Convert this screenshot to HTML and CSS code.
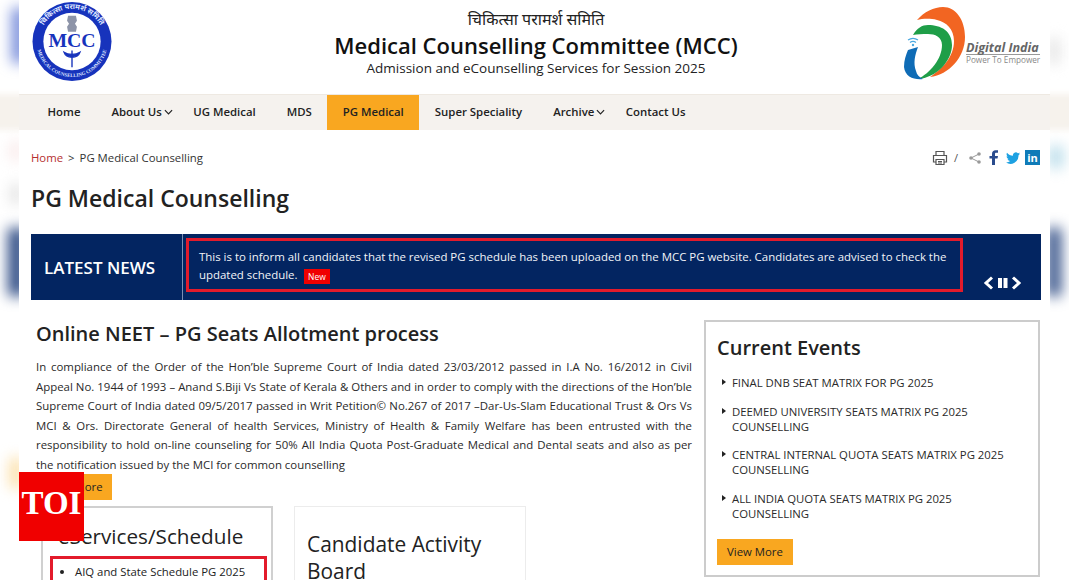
FILE: index.html
```html
<!DOCTYPE html>
<html lang="en">
<head>
<meta charset="utf-8">
<title>PG Medical Counselling</title>
<link rel="stylesheet" href="styles.css">
</head>
<body>
<div class="backdrop" aria-hidden="true">
  <div class="blob blob-blue"></div>
  <div class="blob blob-beige"></div>
  <div class="blob blob-pink"></div>
  <div class="blob blob-grey"></div>
  <div class="blob blob-navy-l"></div>
  <div class="blob blob-orange"></div>
  <div class="blob blob-grey-r"></div>
  <div class="blob blob-sky"></div>
  <div class="blob blob-navy-r"></div>
</div>
<div class="page">
  <header class="masthead">
    <svg class="seal" viewBox="0 0 82 80">
      <circle cx="41" cy="40" r="40" fill="#1733bc"/>
      <circle cx="41" cy="40" r="29" fill="#fff"/>
      <defs>
        <path id="sealTop" d="M8 40a33 33 0 0 1 66 0"/>
        <path id="sealBottom" d="M5 40a36 36 0 0 0 72 0"/>
      </defs>
      <text class="seal-arc seal-arc-top"><textPath href="#sealTop" startOffset="50%" text-anchor="middle">चिकित्सा परामर्श समिति</textPath></text>
      <text class="seal-arc"><textPath href="#sealBottom" startOffset="50%" text-anchor="middle">MEDICAL COUNSELLING COMMITTEE</textPath></text>
      <path d="M37 14h8l1 5-2 3 2 3-1 5h-8l-1-5 2-3-2-3z" fill="#8d94a8"/>
      <text class="seal-mcc" x="41" y="46" text-anchor="middle">MCC</text>
      <path d="M41 49v17M33 51c3 2 5 2 8 2s5 0 8-2c-1 3-4 5-8 5s-7-2-8-5z" stroke="#1733bc" stroke-width="1.400" fill="#1733bc"/>
    </svg>
    <div class="masthead-title">
      <div class="hindi">चिकित्सा परामर्श समिति</div>
      <div class="committee">Medical Counselling Committee (MCC)</div>
      <div class="tagline">Admission and eCounselling Services for Session 2025</div>
    </div>
    <div class="digital-india">
      <svg class="di-mark" viewBox="0 0 62 74">
        <path d="M13 13C20 5 30 0 39 0 52 0 61 13 61 30 61 50 45 68 26 70 38 62 50 50 50 34 50 22 42 15 33 13 25 11 18 12 13 13z" fill="#f26522"/>
        <path d="M9 28C13 21 18 18 24 18 37 18 48 24 48 38 48 54 32 71 14 72 26 66 38 52 38 38 38 30 31 27 24 27 18 27 13 27 9 28z" fill="#1f9e48"/>
        <path d="M4 43L14 40C11 48 9 56 12 64 13 68 15 70 19 72 10 73 1 70 0 60 0 53 2 48 4 43z" fill="#0f6cb6"/>
        <path d="M4 33C7 31 11 31 14 33M6 35.500C8 34 10 34 12 35.500" fill="none" stroke="#4aa8e0" stroke-width="1.200"/>
        <circle cx="9" cy="38" r="1.200" fill="#4aa8e0"/>
      </svg>
      <div class="di-text">
        <div class="di-name">Digital India</div>
        <div class="di-sub">Power To Empower</div>
      </div>
    </div>
  </header>

  <nav class="nav">
    <a class="nav-item">Home</a>
    <a class="nav-item nav-drop">About Us<svg class="chev" viewBox="0 0 10 6"><path d="M1 1l4 4 4-4"/></svg></a>
    <a class="nav-item">UG Medical</a>
    <a class="nav-item">MDS</a>
    <a class="nav-item nav-active">PG Medical</a>
    <a class="nav-item">Super Speciality</a>
    <a class="nav-item nav-drop">Archive<svg class="chev" viewBox="0 0 10 6"><path d="M1 1l4 4 4-4"/></svg></a>
    <a class="nav-item">Contact Us</a>
  </nav>

  <div class="crumb-row">
    <div class="crumbs"><a class="crumb-home">Home</a><span class="crumb-sep">&gt;</span><span>PG Medical Counselling</span></div>
    <div class="tools">
      <svg class="tool-print" viewBox="0 0 16 16"><path d="M4 5V1.500h8V5M4 12H1.500V5.500h13V12H12M4 9.500h8v5H4zM6 11.500h4M6 13h4" fill="none" stroke="#555" stroke-width="1.200"/></svg>
      <span class="tool-slash">/</span>
      <svg class="tool-share" viewBox="0 0 12 12"><circle cx="10" cy="2" r="1.800"/><circle cx="2" cy="6" r="1.800"/><circle cx="10" cy="10" r="1.800"/><path d="M10 2L2 6l8 4" fill="none" stroke="#999"/></svg>
      <svg class="tool-fb" viewBox="0 0 9 15"><path d="M3 15V8.500H.5V6H3V4C3 1.500 4.500.3 6.500.3H9v2.500H7.300C6.300 2.800 6 3.300 6 4v2h3l-.5 2.500H6V15z" fill="#2a4b8d"/></svg>
      <svg class="tool-tw" viewBox="0 0 24 20"><path d="M24 2.400c-.9.400-1.800.7-2.800.8 1-.6 1.800-1.600 2.200-2.700-1 .6-2 1-3.100 1.200A4.900 4.900 0 0 0 12 6.200C8 6 4.300 4.100 1.700.9.400 3.200 1 6 3.200 7.500c-.8 0-1.600-.2-2.200-.6 0 2.400 1.700 4.400 3.900 4.900-.7.200-1.500.2-2.200.1.600 2 2.400 3.400 4.600 3.400A9.900 9.900 0 0 1 0 17.800 14 14 0 0 0 21.500 5.300c1-.7 1.800-1.700 2.500-2.900z" fill="#1da1e2"/></svg>
      <span class="tool-in">in</span>
    </div>
  </div>

  <h1 class="page-title">PG Medical Counselling</h1>

  <section class="news">
    <div class="news-label">LATEST NEWS</div>
    <div class="news-body">
      <div class="news-msg">This is to inform all candidates that the revised PG schedule has been uploaded on the MCC PG website. Candidates are advised to check the updated schedule. <span class="new-tag">New</span></div>
      <div class="news-ctrl">
        <svg viewBox="0 0 39 14"><path d="M9 1.500L3 7l6 5.500M30 1.500L36 7l-6 5.500" fill="none" stroke="#fff" stroke-width="3"/><path d="M15 2h4v10h-4zM20.500 2h4v10h-4z" fill="#fff"/></svg>
      </div>
    </div>
  </section>

  <div class="columns">
    <main class="col-main">
      <h2 class="intro-title">Online NEET – PG Seats Allotment process</h2>
      <p class="intro-text">In compliance of the Order of the Hon’ble Supreme Court of India dated 23/03/2012 passed in I.A No. 16/2012 in Civil Appeal No. 1944 of 1993 – Anand S.Biji Vs State of Kerala &amp; Others and in order to comply with the directions of the Hon’ble Supreme Court of India dated 09/5/2017 passed in Writ Petition© No.267 of 2017 –Dar-Us-Slam Educational Trust &amp; Ors Vs MCI &amp; Ors. Directorate General of health Services, Ministry of Health &amp; Family Welfare has been entrusted with the responsibility to hold on-line counseling for 50% All India Quota Post-Graduate Medical and Dental seats and also as per the notification issued by the MCI for common counselling</p>
      <a class="btn btn-read">Read More</a>
      <div class="cards">
        <div class="card card-services">
          <h3 class="card-title">eServices/Schedule</h3>
          <ul class="red-list"><li>AIQ and State Schedule PG 2025</li></ul>
        </div>
        <div class="card card-board">
          <h3 class="card-title">Candidate Activity Board</h3>
        </div>
      </div>
    </main>
    <aside class="events">
      <h2 class="events-title">Current Events</h2>
      <ul class="events-list">
        <li>FINAL DNB SEAT MATRIX FOR PG 2025</li>
        <li>DEEMED UNIVERSITY SEATS MATRIX PG 2025 COUNSELLING</li>
        <li>CENTRAL INTERNAL QUOTA SEATS MATRIX PG 2025 COUNSELLING</li>
        <li>ALL INDIA QUOTA SEATS MATRIX PG 2025 COUNSELLING</li>
      </ul>
      <a class="btn">View More</a>
    </aside>
  </div>
</div>
<div class="toi">TOI</div>
</body>
</html>
```

FILE: styles.css
```css
* { box-sizing: border-box; }
html, body { margin: 0; height: 580px; overflow: hidden; }
body {
  position: relative;
  background: #fff;
  color: #222;
  font-family: "Open Sans", "Noto Sans", "Liberation Sans", sans-serif;
  font-size: 11.350px;
}
.backdrop { position: absolute; inset: 0; overflow: hidden; }
.blob { position: absolute; filter: blur(7px); }
.blob-blue { left: 12px; top: 8px; width: 14px; height: 55px; background: #6f86d8; }
.blob-beige { left: -10px; right: -10px; top: 94px; height: 36px; background: #f6f2ec; filter: blur(3px); }
.blob-pink { left: 10px; top: 142px; width: 12px; height: 18px; background: #f8e8e8; }
.blob-grey { left: 10px; top: 184px; width: 12px; height: 20px; background: #e2e2e2; }
.blob-navy-l { left: 8px; top: 228px; width: 18px; height: 68px; background: #2f4c85; }
.blob-orange { left: 10px; top: 458px; width: 12px; height: 30px; background: #fbdca0; }
.blob-grey-r { right: 10px; top: 38px; width: 10px; height: 26px; background: #e0e0e0; }
.blob-sky { right: 6px; top: 146px; width: 14px; height: 22px; background: #b8dcea; }
.blob-navy-r { right: 8px; top: 228px; width: 14px; height: 68px; background: #2f4c85; }

.page { position: relative; width: 1031px; height: 580px; margin: 0 19px; background: #fff; overflow: hidden; }

.masthead { height: 94px; display: flex; align-items: flex-start; padding: 2px 10px 0 12px; }
.seal { width: 82px; height: 79px; flex: none; }
.seal-arc { font-size: 5px; font-weight: 700; fill: #dfe6ff; font-family: "Liberation Serif", serif; }
.seal-arc-top { font-size: 7.500px; font-family: "Noto Sans", sans-serif; }
.seal-mcc { font-size: 20px; font-weight: 700; fill: #1733bc; font-family: "Liberation Serif", serif; }
.masthead-title { flex: 1; text-align: center; padding: 7px 0 0 0; margin-left: 55px; }
.hindi { font-size: 16px; line-height: 20px; color: #222; font-family: "Noto Sans", "Open Sans", sans-serif; }
.committee { font-size: 22px; font-weight: 600; line-height: 30px; margin-top: 1px; color: #111; }
.tagline { font-size: 13.500px; font-weight: 500; line-height: 18px; margin-top: -1px; color: #222; }
.digital-india { display: flex; align-items: flex-start; width: 136px; flex: none; padding-top: 5px; }
.di-mark { width: 62px; height: 74px; flex: none; }
.di-text { margin: 35px 0 0 0; }
.di-name { font-size: 12.600px; font-weight: 700; font-style: italic; color: #666; line-height: 12px; border-bottom: 1px solid #999; white-space: nowrap; }
.di-sub { font-size: 8.200px; color: #888; line-height: 10px; white-space: nowrap; }

.nav { height: 36px; display: flex; align-items: stretch; padding-left: 13px; background: #f5f2ee; border-top: 1px solid #eee9e2; }
.nav-item { display: flex; align-items: center; padding: 0 15.500px 2px; font-size: 11.400px; font-weight: 600; color: #222; }
.nav-drop { padding-right: 5px; }
.nav-active { background: #f9a720; }
.chev { width: 9px; height: 6px; margin-left: 2px; fill: none; stroke: #222; stroke-width: 1.300; }

.crumb-row { display: flex; justify-content: space-between; align-items: center; padding: 8px 10px 0 12px; height: 47px; }
.crumbs { display: flex; gap: 5px; color: #333; }
.crumb-home { color: #b5302f; }
.tools { display: flex; align-items: center; gap: 8px; }
.tool-print { width: 16px; height: 16px; }
.tool-slash { color: #555; font-size: 11px; margin: 0 3px 0 -2px; }
.tool-share { width: 12px; height: 12px; fill: #999; }
.tool-fb { width: 9px; height: 15px; }
.tool-tw { width: 14px; height: 12px; }
.tool-in { width: 15px; height: 15px; background: #0f7bb8; color: #fff; font-size: 11px; font-weight: 700; line-height: 15px; text-align: center; margin-left: -3px; }

.page-title { margin: 0; padding-left: 12px; font-size: 23px; font-weight: 600; line-height: 34px; color: #222; margin-top: 4px; }

.news { display: flex; height: 66px; margin: 19px 9px 0 12px; background: #032561; color: #fff; }
.news-label { width: 152px; flex: none; display: flex; align-items: center; padding-left: 13px; font-size: 17px; font-weight: 600; border-right: 1px solid #7b8fb4; }
.news-body { flex: 1; display: flex; position: relative; padding: 4px 0 0 3px; }
.news-msg { width: 777px; height: 54px; border: 3px solid #e31b2b; padding: 7px 10px 0 10px; font-size: 11.450px; line-height: 18px; color: #f2f4f8; }
.new-tag { display: inline-block; background: #f00000; color: #fff; font-size: 8.500px; font-weight: 500; line-height: 15px; padding: 0 4.500px; margin-left: 3px; vertical-align: -1px; }
.news-ctrl { position: absolute; right: 19px; bottom: 10px; }
.news-ctrl svg { display: block; width: 39px; height: 14px; }

.columns { display: flex; gap: 12px; padding: 20px 10px 0 17px; }
.col-main { width: 656px; flex: none; padding-top: 1px; }
.intro-title { margin: 0; font-size: 20px; font-weight: 600; line-height: 26px; color: #222; }
.intro-text { margin: 10px 0 0 0; font-size: 11.420px; line-height: 19.500px; text-align: justify; color: #2a2a2a; }
.btn { display: inline-block; background: #f9a720; color: #222; padding: 0 10px; line-height: 26px; height: 26px; }
.btn-read { padding: 0 9px; }
.cards { display: flex; gap: 21px; margin: 6px 0 0 5px; }
.card { width: 232px; height: 74px; padding: 16px 12px 0 12px; background: #fff; }
.card-services { border: 2px solid #d0d0d0; border-bottom: 0; padding: 15px 5px 0 15px; }
.card-board { border: 1px solid #ececec; border-bottom: 0; }
.card-title { margin: 0; font-size: 20.700px; font-weight: 500; line-height: 26px; color: #222; }
.card-board .card-title { margin-top: 8px; font-size: 20.900px; line-height: 26.500px; }
.red-list { margin: 7px 0 0 -8px; padding: 5px 0 0 22px; height: 60px; border: 3px solid #e31b2b; border-bottom: 0; width: 217px; list-style: disc; }
.events { width: 336px; height: 257px; flex: none; border: 2px solid #ccc; padding: 12px 12px 0 11px; }
.events-title { margin: 0; font-size: 20px; font-weight: 600; line-height: 28px; color: #222; }
.events-list { list-style: none; margin: 13px 0 0 0; padding: 0 0 0 15px; color: #2a2a2a; }
.events-list li { position: relative; line-height: 15px; margin-bottom: 13.700px; }
.events-list li::before { content: ""; position: absolute; left: -10px; top: 4px; border-left: 4px solid #222; border-top: 3px solid transparent; border-bottom: 3px solid transparent; }
.events .btn { margin-top: 4px; }

.toi { position: absolute; left: 19px; top: 472px; width: 65px; height: 69px; background: #f00000; color: #fff; font-family: "Liberation Serif", serif; font-size: 33px; font-weight: 700; line-height: 63px; text-align: center; }
```
